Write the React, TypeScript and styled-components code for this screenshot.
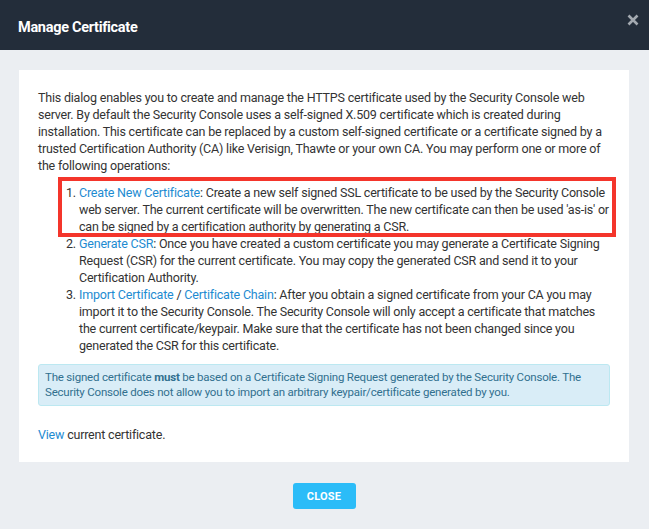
import styled, { createGlobalStyle } from 'styled-components';

const GlobalStyle = createGlobalStyle`
  html, body {
    margin: 0;
    padding: 0;
    background: #ebeef2;
  }
  body {
    font-family: Roboto, 'Liberation Sans', Arial, sans-serif;
    -webkit-font-smoothing: antialiased;
  }
`;

const Dialog = styled.div`
  width: 649px;
  height: 529px;
  background: #ebeef2;
  display: flex;
  flex-direction: column;
`;

const Header = styled.div`
  height: 50px;
  flex: none;
  background: #232d3a;
  display: flex;
  align-items: center;
  justify-content: space-between;
  padding: 0 10px 0 18px;
  box-sizing: border-box;
`;

const Title = styled.h2`
  margin: 0;
  color: #ffffff;
  font-size: 14.5px;
  font-weight: 700;
  letter-spacing: -0.3px;
  padding-top: 4px;
`;

const CloseIcon = styled.button`
  border: 0;
  background: none;
  padding: 0;
  width: 12px;
  height: 12px;
  margin-bottom: 10px;
  display: flex;
  cursor: pointer;
`;

const Body = styled.div`
  flex: 1;
  padding: 20px 20px 0 19px;
  display: flex;
  flex-direction: column;
  align-items: center;
`;

const Panel = styled.div`
  align-self: stretch;
  background: #ffffff;
  padding: 19px 19px 19px 19px;
  color: #333333;
  font-size: 12.5px;
  letter-spacing: -0.2px;
  line-height: 17px;
`;

const Para = styled.p`
  margin: 0 0 10px;
`;

const Steps = styled.ol`
  list-style: none;
  margin: 0;
  padding: 0 0 0 25px;
  display: flex;
  flex-direction: column;
`;

const Step = styled.li<{ $marked?: boolean }>`
  display: flex;
  position: relative;

  &::after {
    content: '';
    display: ${(p) => (p.$marked ? 'block' : 'none')};
    position: absolute;
    top: -7px;
    bottom: -2px;
    left: -5px;
    right: -6px;
    border: 4px solid #f4352b;
    pointer-events: none;
  }
`;

const Num = styled.span`
  flex: none;
  width: 16px;
  padding-left: 3px;
  box-sizing: border-box;
`;

const Link = styled.a`
  color: #1d8bd1;
  text-decoration: none;
`;

const Notice = styled.div`
  margin-top: 10px;
  background: #d9edf7;
  border: 1px solid #bce8f1;
  border-radius: 3px;
  color: #31708f;
  font-size: 11.5px;
  letter-spacing: -0.2px;
  line-height: 15px;
  padding: 5px 6px;
`;

const Footer = styled.p`
  margin: 20px 0 0;
`;

const CloseButton = styled.button`
  margin-top: 21px;
  width: 63px;
  height: 26px;
  border: 0;
  border-radius: 3px;
  background: #2bbcf8;
  color: #ffffff;
  font-family: Roboto, 'Liberation Sans', Arial, sans-serif;
  font-size: 11px;
  font-weight: 700;
  letter-spacing: 0.2px;
  cursor: pointer;
`;

export default function App() {
  return (
    <Dialog>
      <GlobalStyle />
      <Header>
        <Title>Manage Certificate</Title>
        <CloseIcon aria-label="Close">
          <svg width="12" height="12" viewBox="0 0 12 12">
            <path d="M1.5 1.5 L10.5 10.5 M10.5 1.5 L1.5 10.5" stroke="#a3a9b0" strokeWidth="2.6" />
          </svg>
        </CloseIcon>
      </Header>
      <Body>
        <Panel>
          <Para>
            This dialog enables you to create and manage the HTTPS certificate used by the Security Console web
            server. By default the Security Console uses a self-signed X.509 certificate which is created during
            installation. This certificate can be replaced by a custom self-signed certificate or a certificate signed by a
            trusted Certification Authority (CA) like Verisign, Thawte or your own CA. You may perform one or more of
            the following operations:
          </Para>
          <Steps>
            <Step $marked>
              <Num>1.</Num>
              <span>
                <Link href="#">Create New Certificate</Link>: Create a new self signed SSL certificate to be used by
                the Security Console web server. The current certificate will be overwritten. The new certificate can
                then be used 'as-is' or can be signed by a certification authority by generating a CSR.
              </span>
            </Step>
            <Step>
              <Num>2.</Num>
              <span>
                <Link href="#">Generate CSR</Link>: Once you have created a custom certificate you may generate a
                Certificate Signing Request (CSR) for the current certificate. You may copy the generated CSR and send
                it to your Certification Authority.
              </span>
            </Step>
            <Step>
              <Num>3.</Num>
              <span>
                <Link href="#">Import Certificate</Link> / <Link href="#">Certificate Chain</Link>: After you obtain a
                signed certificate from your CA you may import it to the Security Console. The Security Console will
                only accept a certificate that matches the current certificate/keypair. Make sure that the certificate
                has not been changed since you generated the CSR for this certificate.
              </span>
            </Step>
          </Steps>
          <Notice>
            The signed certificate <b>must</b> be based on a Certificate Signing Request generated by the Security
            Console. The Security Console does not allow you to import an arbitrary keypair/certificate generated by
            you.
          </Notice>
          <Footer>
            <Link href="#">View</Link> current certificate.
          </Footer>
        </Panel>
        <CloseButton>CLOSE</CloseButton>
      </Body>
    </Dialog>
  );
}
